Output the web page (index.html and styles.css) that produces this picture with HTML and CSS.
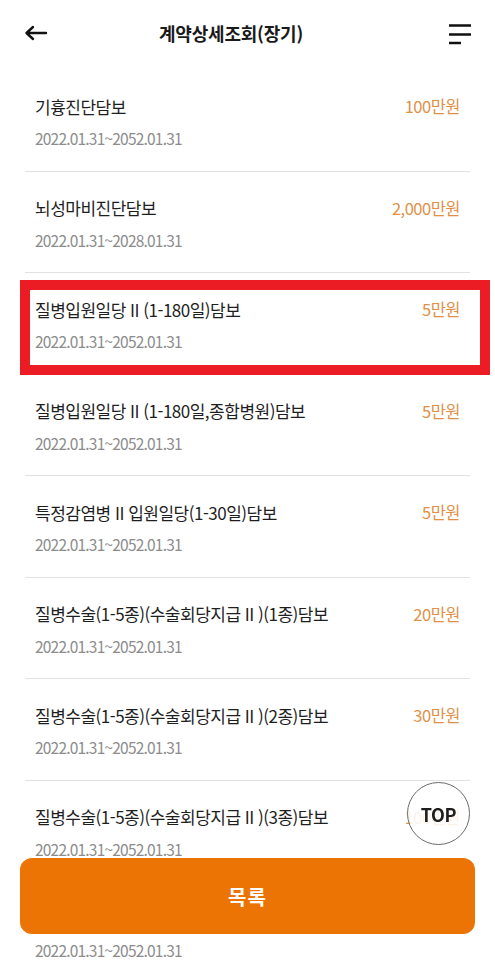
FILE: index.html
```html
<!DOCTYPE html>
<html lang="ko">
<head>
<meta charset="utf-8">
<title>계약상세조회(장기)</title>
<link rel="stylesheet" href="styles.css">
</head>
<body>
<header class="topbar">
  <button class="icon-btn back" aria-label="뒤로">
    <svg width="24" height="16" viewBox="0 0 24 16"><path d="M22 8H3M9 2L2.5 8L9 14" fill="none" stroke="#111" stroke-width="2.4" stroke-linecap="round" stroke-linejoin="round"/></svg>
  </button>
  <h1 class="title">계약상세조회(장기)</h1>
  <button class="icon-btn menu" aria-label="메뉴">
    <svg width="24" height="22" viewBox="0 0 24 22"><path d="M1 2.5H23M1 11.5H23M1 20H13" fill="none" stroke="#111" stroke-width="2.6"/></svg>
  </button>
</header>

<ul class="list">
  <li class="row">
    <div class="row-head"><span class="name">기흉진단담보</span><span class="amount">100만원</span></div>
    <div class="date">2022.01.31~2052.01.31</div>
  </li>
  <li class="row">
    <div class="row-head"><span class="name">뇌성마비진단담보</span><span class="amount">2,000만원</span></div>
    <div class="date">2022.01.31~2028.01.31</div>
  </li>
  <li class="row">
    <div class="row-head"><span class="name">질병입원일당 II (1-180일)담보</span><span class="amount">5만원</span></div>
    <div class="date">2022.01.31~2052.01.31</div>
    <div class="highlight"></div>
  </li>
  <li class="row">
    <div class="row-head"><span class="name">질병입원일당 II (1-180일,종합병원)담보</span><span class="amount">5만원</span></div>
    <div class="date">2022.01.31~2052.01.31</div>
  </li>
  <li class="row">
    <div class="row-head"><span class="name">특정감염병 II 입원일당(1-30일)담보</span><span class="amount">5만원</span></div>
    <div class="date">2022.01.31~2052.01.31</div>
  </li>
  <li class="row">
    <div class="row-head"><span class="name">질병수술(1-5종)(수술회당지급 II )(1종)담보</span><span class="amount">20만원</span></div>
    <div class="date">2022.01.31~2052.01.31</div>
  </li>
  <li class="row">
    <div class="row-head"><span class="name">질병수술(1-5종)(수술회당지급 II )(2종)담보</span><span class="amount">30만원</span></div>
    <div class="date">2022.01.31~2052.01.31</div>
  </li>
  <li class="row">
    <div class="row-head"><span class="name">질병수술(1-5종)(수술회당지급 II )(3종)담보</span><span class="amount">100만원</span></div>
    <div class="date">2022.01.31~2052.01.31</div>
  </li>
  <li class="row">
    <div class="row-head"><span class="name">질병수술(1-5종)(수술회당지급 II )(4종)담보</span><span class="amount">100만원</span></div>
    <div class="date">2022.01.31~2052.01.31</div>
  </li>
</ul>

<button class="top-btn">TOP</button>
<button class="list-btn">목록</button>
</body>
</html>
```

FILE: styles.css
```css
html, body {
  margin: 0;
  padding: 0;
  overflow: hidden;
  background: #fff;
}
body {
  font-family: "Noto Sans CJK KR", "Noto Sans", sans-serif;
  color: #222;
  height: 960px;
}
button {
  font-family: inherit;
  border: 0;
  background: none;
  padding: 0;
  cursor: pointer;
}
.topbar {
  height: 70px;
  display: flex;
  align-items: flex-start;
  padding: 0 23px 0 24px;
  box-sizing: border-box;
}
.icon-btn {
  display: flex;
  align-items: center;
  justify-content: center;
  height: 24px;
  margin-top: 21px;
}
.back svg { display: block; }
.menu { margin-top: 22px; }
.title {
  flex: 1;
  margin: 19px 0 0 0;
  text-align: center;
  font-size: 18px;
  font-weight: 700;
  letter-spacing: -0.2px;
  line-height: 28px;
  padding-right: 34px;
  color: #1a1a1a;
}
.list {
  list-style: none;
  margin: 0 25px;
  padding: 0;
}
.row {
  position: relative;
  height: 101.5px;
  box-sizing: border-box;
  padding: 24px 10px 0 10px;
  border-bottom: 1.5px solid #e2e2e2;
}
.row-head {
  display: flex;
  justify-content: space-between;
  align-items: center;
  height: 24px;
}
.name {
  font-size: 17px;
  letter-spacing: -0.5px;
  color: #1e1e1e;
  white-space: nowrap;
}
.amount {
  font-size: 16.5px;
  letter-spacing: -0.5px;
  color: #df9148;
  white-space: nowrap;
}
.date {
  margin-top: 8px;
  font-size: 15.5px;
  line-height: 24px;
  letter-spacing: -0.8px;
  color: #8c8c8c;
}
.highlight {
  position: absolute;
  left: -5px;
  right: -20px;
  top: 7px;
  bottom: -1.5px;
  border: 10px solid #ec1c24;
  pointer-events: none;
}
.top-btn {
  position: fixed;
  left: 407px;
  top: 782px;
  width: 63px;
  height: 63px;
  border-radius: 50%;
  border: 1px solid #6a6a6a;
  background: rgba(255, 255, 255, 0.88);
  font-size: 18px;
  font-weight: 700;
  color: #1e1e1e;
  letter-spacing: -0.3px;
}
.list-btn {
  position: fixed;
  left: 20px;
  right: 20px;
  bottom: 26px;
  height: 76px;
  border-radius: 12px;
  background: #ec7404;
  color: #fff;
  font-size: 20px;
  font-weight: 700;
  letter-spacing: 1px;
}
```
